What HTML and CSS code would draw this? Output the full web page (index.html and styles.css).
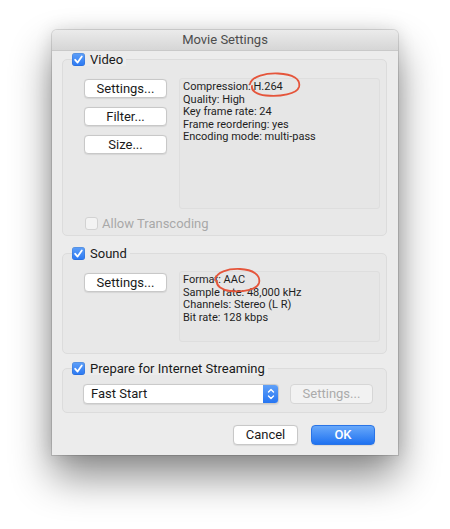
FILE: index.html
```html
<!DOCTYPE html>
<html>
<head>
<meta charset="utf-8">
<link rel="stylesheet" href="styles.css">
</head>
<body>
<div class="stage">
  <div class="window">
    <div class="titlebar">Movie Settings</div>
    <div class="content">
      <section class="group group-video">
        <div class="legend"><span class="cb on"><svg viewBox="0 0 13 13" width="13" height="13"><polyline points="3.2,6.8 5.6,9.6 9.8,3.4" fill="none" stroke="#fff" stroke-width="1.8" stroke-linecap="round" stroke-linejoin="round"/></svg></span><span>Video</span></div>
        <div class="group-body body-video">
          <div class="btn-col">
            <button class="btn">Settings...</button>
            <button class="btn">Filter...</button>
            <button class="btn">Size...</button>
          </div>
          <div class="info info-video">
            <div>Compression: H.264</div>
            <div>Quality: High</div>
            <div>Key frame rate: 24</div>
            <div>Frame reordering: yes</div>
            <div>Encoding mode: multi-pass</div>
          </div>
        </div>
        <div class="transcode"><span class="cb off"></span><span>Allow Transcoding</span></div>
      </section>

      <section class="group group-sound">
        <div class="legend"><span class="cb on"><svg viewBox="0 0 13 13" width="13" height="13"><polyline points="3.2,6.8 5.6,9.6 9.8,3.4" fill="none" stroke="#fff" stroke-width="1.8" stroke-linecap="round" stroke-linejoin="round"/></svg></span><span>Sound</span></div>
        <div class="group-body body-sound">
          <div class="btn-col">
            <button class="btn">Settings...</button>
          </div>
          <div class="info info-sound">
            <div>Format: AAC</div>
            <div>Sample rate: 48,000 kHz</div>
            <div>Channels: Stereo (L R)</div>
            <div>Bit rate: 128 kbps</div>
          </div>
        </div>
      </section>

      <section class="group group-stream">
        <div class="legend"><span class="cb on"><svg viewBox="0 0 13 13" width="13" height="13"><polyline points="3.2,6.8 5.6,9.6 9.8,3.4" fill="none" stroke="#fff" stroke-width="1.8" stroke-linecap="round" stroke-linejoin="round"/></svg></span><span>Prepare for Internet Streaming</span></div>
        <div class="stream-row">
          <div class="popup">
            <span class="popup-label">Fast Start</span>
            <span class="stepper"><svg viewBox="0 0 16 20" width="16" height="20"><polyline points="5.5,8 8,5.5 10.5,8" fill="none" stroke="#fff" stroke-width="1.4" stroke-linecap="round" stroke-linejoin="round"/><polyline points="5.5,12 8,14.5 10.5,12" fill="none" stroke="#fff" stroke-width="1.4" stroke-linecap="round" stroke-linejoin="round"/></svg></span>
          </div>
          <button class="btn btn-disabled">Settings...</button>
        </div>
      </section>

      <div class="footer">
        <button class="btn btn-cancel">Cancel</button>
        <button class="btn btn-ok">OK</button>
      </div>
    </div>

    <svg class="mark mark-h264" viewBox="0 0 56 28" width="56" height="28"><path d="M4 13 C6 5 20 2 32 2.5 C47 3 55 8 53 16 C51 23 34 26 20 24.5 C11 23.5 5 20 6 15" fill="none" stroke="#e5553b" stroke-width="1.8" stroke-linecap="round"/></svg>
    <svg class="mark mark-aac" viewBox="0 0 50 28" width="50" height="28"><path d="M3 14 C4 6 16 2.5 28 3 C41 3.5 49 9 47 17 C45 24 30 26.5 18 25 C10 24 4 20 5 15" fill="none" stroke="#e5553b" stroke-width="1.8" stroke-linecap="round"/></svg>
  </div>
</div>
</body>
</html>
```

FILE: styles.css
```css
* { box-sizing: border-box; }
html, body {
  margin: 0;
  padding: 0;
  background: #ffffff;
}
body {
  font-family: Roboto, "Liberation Sans", sans-serif;
  font-size: 13px;
  color: #1a1a1a;
}
.stage {
  padding: 30px 0 0 52px;
  min-height: 529px;
}
.window {
  position: relative;
  width: 346px;
  background: #ececec;
  border-radius: 5px 5px 0 0;
  box-shadow: 0 0 0 1px rgba(0,0,0,0.12), 0 0 18px rgba(0,0,0,0.12), 0 22px 40px rgba(0,0,0,0.45);
}
.titlebar {
  height: 21px;
  border-bottom: 1px solid #c9c9c9;
  background: linear-gradient(#ebebeb, #d6d6d6);
  border-radius: 5px 5px 0 0;
  text-align: center;
  line-height: 20px;
  color: #4d4d4d;
  font-size: 13px;
}
.content {
  padding: 8px 11px 10px 10px;
}
.group {
  border: 1px solid #dcdcdc;
  border-radius: 5px;
  background: #e8e8e8;
}
.group-sound { margin-top: 17px; padding-bottom: 11px; }
.group-stream { margin-top: 14px; padding-bottom: 8px; }
.group-video { padding-bottom: 5px; }
.legend {
  display: flex;
  align-items: center;
  gap: 5px;
  height: 13px;
  margin-top: -7px;
  margin-left: 9px;
  width: max-content;
  padding-right: 3px;
  background: #ececec;
}
.cb {
  display: inline-flex;
  width: 13px;
  height: 13px;
  border-radius: 3px;
  flex: none;
}
.cb.on {
  background: linear-gradient(#5fa0f8, #2a78f3);
  box-shadow: inset 0 0 0 0.5px rgba(0,0,0,0.15);
}
.cb.off {
  background: #f3f3f3;
  border: 1px solid #d2d2d2;
}
.group-body {
  display: flex;
  padding-left: 21px;
  padding-right: 6px;
}
.body-video { margin-top: 12px; }
.body-sound { margin-top: 11px; }
.btn-col {
  display: flex;
  flex-direction: column;
  gap: 9px;
  width: 83px;
  flex: none;
}
.body-video .btn-col { padding-top: 1px; }
.body-sound .btn-col { padding-top: 2px; }
.btn {
  font-family: inherit;
  font-size: 13px;
  color: #1a1a1a;
  height: 19px;
  width: 83px;
  padding: 0;
  margin: 0;
  background: #ffffff;
  border: 1px solid #c8c8c8;
  border-radius: 4px;
  box-shadow: 0 0.5px 1px rgba(0,0,0,0.08);
  line-height: 17px;
}
.info {
  flex: 1;
  margin-left: 12px;
  border: 1px solid #dedede;
  border-radius: 3px;
  background: #e6e6e6;
  padding: 2px 0 0 3px;
  font-size: 11px;
  line-height: 12.5px;
  color: #1e1e1e;
}
.info-video { height: 131px; }
.info-sound { height: 71px; }
.transcode {
  display: flex;
  align-items: center;
  gap: 4px;
  height: 13px;
  margin-top: 8px;
  margin-left: 22px;
  color: #a8a8a8;
}
.stream-row {
  display: flex;
  gap: 11px;
  margin-top: 9px;
  margin-left: 20px;
}
.popup {
  display: flex;
  align-items: center;
  width: 196px;
  height: 20px;
  background: #ffffff;
  border: 1px solid #cacaca;
  border-radius: 4px;
  box-shadow: 0 0.5px 1px rgba(0,0,0,0.08);
  overflow: hidden;
}
.popup-label {
  flex: 1;
  padding-left: 7px;
  line-height: 18px;
}
.stepper {
  display: flex;
  width: 16px;
  height: 20px;
  margin: -1px -1px -1px 0;
  background: linear-gradient(#62a2f8, #2373f2);
  border-radius: 0 4px 4px 0;
}
.btn-disabled {
  height: 20px;
  background: #f2f2f2;
  border-color: #d6d6d6;
  color: #ababab;
  box-shadow: none;
  line-height: 18px;
}
.footer {
  display: flex;
  justify-content: flex-end;
  gap: 13px;
  margin-top: 12px;
  padding-right: 12px;
}
.btn-cancel {
  width: 65px;
  height: 20px;
  line-height: 18px;
}
.btn-ok {
  width: 64px;
  height: 20px;
  line-height: 18px;
  color: #ffffff;
  font-weight: 500;
  background: linear-gradient(#68a8fa, #1f72f1);
  border-color: #2a74e6;
}
.mark {
  position: absolute;
}
.mark-h264 { left: 194px; top: 41px; }
.mark-aac { left: 160px; top: 236px; }
```
